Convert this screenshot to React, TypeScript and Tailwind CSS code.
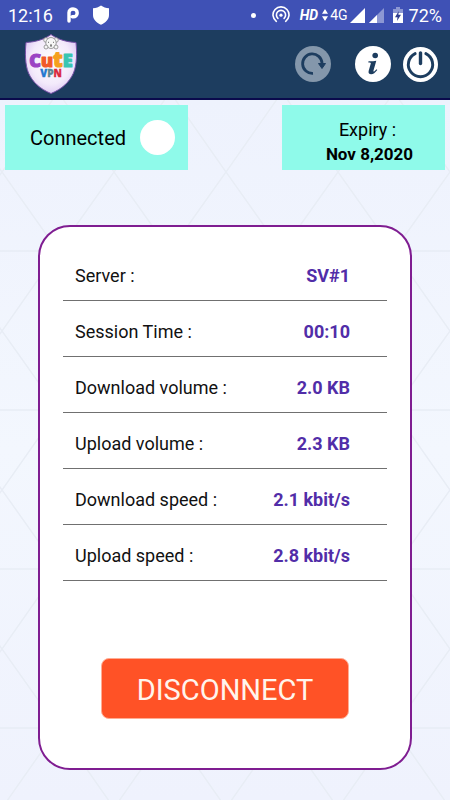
import React from "react";

const stats = [
  { label: "Server :", value: "SV#1" },
  { label: "Session Time :", value: "00:10" },
  { label: "Download volume :", value: "2.0 KB" },
  { label: "Upload volume :", value: "2.3 KB" },
  { label: "Download speed :", value: "2.1 kbit/s" },
  { label: "Upload speed :", value: "2.8 kbit/s" },
];

function StatusBar() {
  return (
    <div className="flex h-[30px] items-center bg-[#3f51b5] px-2 text-white">
      <span className="pt-px text-lg leading-5">12:16</span>
      <svg className="ml-[14px] h-4 w-3" viewBox="0 0 12 16" fill="none" aria-hidden="true">
        <path d="M2 14V5.500C2 3.300 4 2 6 2c2.400 0 4.200 1.600 4.200 3.900S8.500 9.800 6.200 9.800H5.300" stroke="#fff" strokeWidth="3.400" strokeLinecap="round" />
      </svg>
      <svg className="ml-[14px] h-5 w-4" viewBox="0 0 16 20" aria-hidden="true">
        <path d="M8 .5C10.200 2.200 13 3 16 3.200V10c0 4.500-3.500 7.800-8 9.700C3.500 17.800 0 14.500 0 10V3.200C3 3 5.800 2.200 8 .5z" fill="#fff" />
      </svg>
      <div className="ml-auto flex items-center">
        <span className="mr-4 h-[5px] w-[5px] rounded-full bg-white" />
        <svg className="h-[18px] w-[18px]" viewBox="0 0 18 18" fill="none" stroke="#fff" strokeWidth="1.600" strokeLinecap="round" aria-hidden="true">
          <path d="M4.300 15.300A8 8 0 1 1 13.700 15.300" />
          <path d="M5.900 12.400A4.600 4.600 0 1 1 12.100 12.400" />
          <circle cx="9" cy="9.200" r="1.600" fill="#fff" stroke="none" />
        </svg>
        <span className="ml-[10px] text-sm leading-5 font-bold italic">HD</span>
        <svg className="ml-1 h-3 w-[6px]" viewBox="0 0 6 12" fill="#fff" aria-hidden="true">
          <path d="M3 0l3 4.800H0zM3 12l3-4.800H0z" />
        </svg>
        <span className="ml-[2px] text-sm leading-5">4G</span>
        <svg className="ml-[2px] h-[15px] w-[15px]" viewBox="0 0 15 15" aria-hidden="true">
          <path d="M15 0v15H0z" fill="#fff" />
        </svg>
        <svg className="ml-1 h-[15px] w-[15px]" viewBox="0 0 15 15" aria-hidden="true">
          <path d="M15 0v15H0z" fill="#8c97d3" />
          <path d="M8 7v8H0z" fill="#fff" />
        </svg>
        <svg className="ml-[9px] h-4 w-[10px]" viewBox="0 0 10 16" aria-hidden="true">
          <path d="M3 0h4v2h3v5H0V2h3z" fill="#8c97d3" />
          <path d="M0 6h10v10H0z" fill="#fff" />
          <path d="M5.800 4L2 10.300h2.500L4 14l4-6.200H5.400z" fill="#2f3d8f" />
        </svg>
        <span className="ml-[6px] pt-px text-lg leading-5">72%</span>
      </div>
    </div>
  );
}

function Logo() {
  return (
    <svg className="h-[62px] w-[54px] font-['Open_Sans',sans-serif] font-extrabold" viewBox="0 0 54 62" role="img" aria-label="Cute VPN">
      <defs>
        <radialGradient id="shield" cx="50%" cy="45%" r="60%">
          <stop offset="0" stopColor="#fff" />
          <stop offset=".65" stopColor="#f3eafb" />
          <stop offset="1" stopColor="#dcc6f3" />
        </radialGradient>
      </defs>
      <path d="M27 1.500C33 6 42 9 52 9.500c1 10 1 22-2.500 30.500C45.500 49 38 56 27 60.500 16 56 8.500 49 4.500 40 1 31.500 1 19.500 2 9.500 12 9 21 6 27 1.500z" fill="url(#shield)" stroke="#7650a5" strokeWidth="1" />
      <g fill="#f6f6f6" stroke="#888" strokeWidth=".8">
        <circle cx="22" cy="7" r="2.300" />
        <circle cx="32" cy="7" r="2.300" />
        <ellipse cx="27" cy="10" rx="5.200" ry="5.500" />
        <circle cx="22" cy="14" r="2" />
        <circle cx="32" cy="14" r="2" />
        <path d="M24 9.300h1M29 9.300h1M26 12h2M27 12v2" fill="none" stroke="#444" />
      </g>
      <text x="27" y="34" textAnchor="middle" fontSize="18" strokeWidth="1.200" strokeLinejoin="round">
        <tspan fill="#9b43c4" stroke="#9b43c4">C</tspan>
        <tspan fill="#f1592a" stroke="#f1592a">u</tspan>
        <tspan fontSize="21" fill="#f5a01f" stroke="#f5a01f">t</tspan>
        <tspan fill="#38c5b2" stroke="#38c5b2">E</tspan>
      </text>
      <text x="27" y="44" textAnchor="middle" fontSize="10" strokeWidth=".3">
        <tspan fill="#2478d0" stroke="#2478d0">V</tspan>
        <tspan fill="#5a8794" stroke="#5a8794">P</tspan>
        <tspan fill="#d9283c" stroke="#d9283c">N</tspan>
      </text>
    </svg>
  );
}

function Header() {
  return (
    <header className="flex h-[70px] items-center border-b-2 border-[#0a0a4c] bg-[#1d3d5f] pr-3 pl-6">
      <Logo />
      <button type="button" aria-label="Refresh" className="ml-auto">
        <svg className="h-9 w-9" viewBox="0 0 36 36" fill="none" aria-hidden="true">
          <circle cx="18" cy="18" r="18" fill="#8497ab" />
          <path d="M18 27.300A9.700 9.700 0 1 1 27 17" stroke="#1d3d5f" strokeWidth="2.800" />
          <path d="M23.500 17.500H30.500L27 22.500z" fill="#1d3d5f" stroke="#1d3d5f" strokeLinejoin="round" />
        </svg>
      </button>
      <button type="button" aria-label="Information" className="ml-6">
        <svg className="h-9 w-9" viewBox="0 0 36 36" aria-hidden="true">
          <circle cx="18" cy="18" r="18" fill="#fff" />
          <circle cx="20.200" cy="9.500" r="2.800" fill="#1d3d5f" />
          <path d="M13.500 15.300c3 .1 5.500-.2 7.800-.6l-2.800 9.800c-.3 1.200.3 1.300 1 .7l2-2 .8.800c-2.200 2.800-4 4.300-6.100 4.300-2.300 0-3.100-1.500-2.500-3.600l2.100-7.300c.2-.8-.3-1-2.500-1z" fill="#1d3d5f" />
        </svg>
      </button>
      <button type="button" aria-label="Power" className="ml-3">
        <svg className="h-[35px] w-[35px]" viewBox="0 0 36 36" fill="none" stroke="#1d3d5f" strokeWidth="3" aria-hidden="true">
          <circle cx="18" cy="18" r="18" fill="#fff" stroke="none" />
          <path d="M12.500 6.800A12.500 12.500 0 1 0 23.500 6.800" strokeLinecap="round" />
          <path d="M18 6v11" strokeWidth="3.500" strokeLinecap="round" />
        </svg>
      </button>
    </header>
  );
}

function Backdrop() {
  return (
    <svg className="absolute inset-0 h-full w-full" aria-hidden="true">
      <defs>
        <pattern id="lattice" x="2" y="72" width="112" height="159" patternUnits="userSpaceOnUse">
          <path d="M0 0L56 79L112 0M0 159L56 79L112 159M0 79H112" fill="none" stroke="#e8edf5" strokeWidth="1.500" />
        </pattern>
      </defs>
      <rect width="100%" height="100%" fill="url(#lattice)" />
    </svg>
  );
}

export default function App() {
  return (
    <div className="flex min-h-screen flex-col font-[Roboto,'Liberation_Sans',sans-serif]">
      <StatusBar />
      <Header />
      <main className="relative flex grow flex-col bg-linear-to-b from-[#eef2fd] via-[#f3f7fe] to-[#eff2fd]">
        <Backdrop />
        <div className="relative flex justify-between px-[5px] pt-[5px]">
          <div className="flex h-[65px] w-[183px] items-center justify-between bg-[#8ffaea] pr-[13px] pl-[25px]">
            <span className="text-xl text-black">Connected</span>
            <span className="h-[35px] w-[35px] rounded-full bg-white" />
          </div>
          <div className="flex h-[65px] w-[163px] flex-col items-center justify-end bg-[#8ffaea] pb-1 pl-3 text-black">
            <span className="pr-1 text-lg leading-6">Expiry :</span>
            <span className="text-[17px] leading-6 font-bold">Nov 8,2020</span>
          </div>
        </div>
        <section className="relative mx-[38px] mt-[55px] mb-[30px] grow rounded-[32px] border-2 border-[#7f1d91] bg-white px-[23px] pt-[18px] pb-12">
          <dl>
            {stats.map((s) => (
              <div key={s.label} className="flex h-14 items-center justify-between border-b border-[#707070] pt-1.5 pr-[37px] pl-3 text-lg leading-6">
                <dt className="text-[#111]">{s.label}</dt>
                <dd className="font-bold text-[#512da8]">{s.value}</dd>
              </div>
            ))}
          </dl>
          <button type="button" className="mx-auto mt-[77px] block h-[61px] w-[248px] rounded-lg border border-[#ffad94] bg-[#ff5226] pt-1 text-[29px] text-[#fff4ec]">
            DISCONNECT
          </button>
        </section>
      </main>
    </div>
  );
}
